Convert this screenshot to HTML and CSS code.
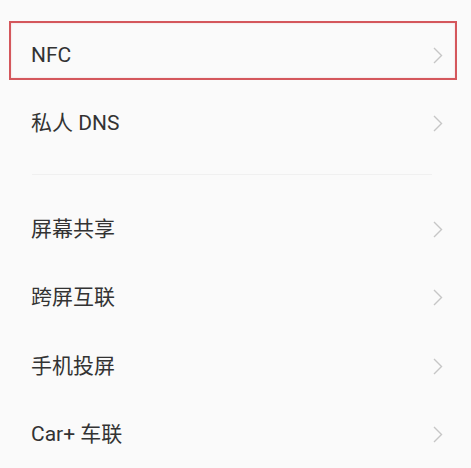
FILE: index.html
```html
<!DOCTYPE html>
<html lang="zh-CN">
<head>
    <meta charset="UTF-8">
    <meta name="viewport" content="width=device-width, initial-scale=1.0">
    <title>连接与共享</title>
    <link rel="stylesheet" href="styles.css">
</head>
<body>

    <div class="settings-list">
        <!-- First group -->
        <div class="group">
            <div class="row is-marked">
                <span class="label">NFC</span>
                <svg class="chevron" viewBox="0 0 10 17"><path d="M1 1l7.5 7.5L1 16"/></svg>
                <span class="highlight"></span>
            </div>
            <div class="row">
                <span class="label">私人 DNS</span>
                <svg class="chevron" viewBox="0 0 10 17"><path d="M1 1l7.5 7.5L1 16"/></svg>
            </div>
        </div>

        <div class="divider"></div>

        <!-- Second group -->
        <div class="group">
            <div class="row">
                <span class="label">屏幕共享</span>
                <svg class="chevron" viewBox="0 0 10 17"><path d="M1 1l7.5 7.5L1 16"/></svg>
            </div>
            <div class="row">
                <span class="label">跨屏互联</span>
                <svg class="chevron" viewBox="0 0 10 17"><path d="M1 1l7.5 7.5L1 16"/></svg>
            </div>
            <div class="row">
                <span class="label">手机投屏</span>
                <svg class="chevron" viewBox="0 0 10 17"><path d="M1 1l7.5 7.5L1 16"/></svg>
            </div>
            <div class="row">
                <span class="label">Car+ 车联</span>
                <svg class="chevron" viewBox="0 0 10 17"><path d="M1 1l7.5 7.5L1 16"/></svg>
            </div>
        </div>
    </div>

</body>
</html>
```

FILE: styles.css
```css
/* General Styling */
body {
    margin: 0;
    background-color: #fafafa;
    font-family: Roboto, "Noto Sans CJK SC", sans-serif;
    color: #333333;
}

/* List */
.settings-list {
    padding-top: 21px;
}

.row {
    position: relative;
    display: flex;
    align-items: center;
    justify-content: space-between;
    height: 68.5px;
    padding: 0 28px 0 31px;
}

.label {
    font-size: 21px;
    line-height: 1;
}

.chevron {
    width: 10px;
    height: 17px;
    fill: none;
    stroke: #c6c6c6;
    stroke-width: 1.4;
}

.divider {
    height: 1px;
    margin: 16px 39px 20px 32px;
    background-color: #f0f0f0;
}

/* Red annotation box round the NFC row */
.highlight {
    position: absolute;
    left: 9px;
    top: 0;
    width: 444px;
    height: 55px;
    border: 2px solid #d4575c;
    box-shadow: inset 0 0 2px rgba(212, 87, 92, 0.25);
}
```
